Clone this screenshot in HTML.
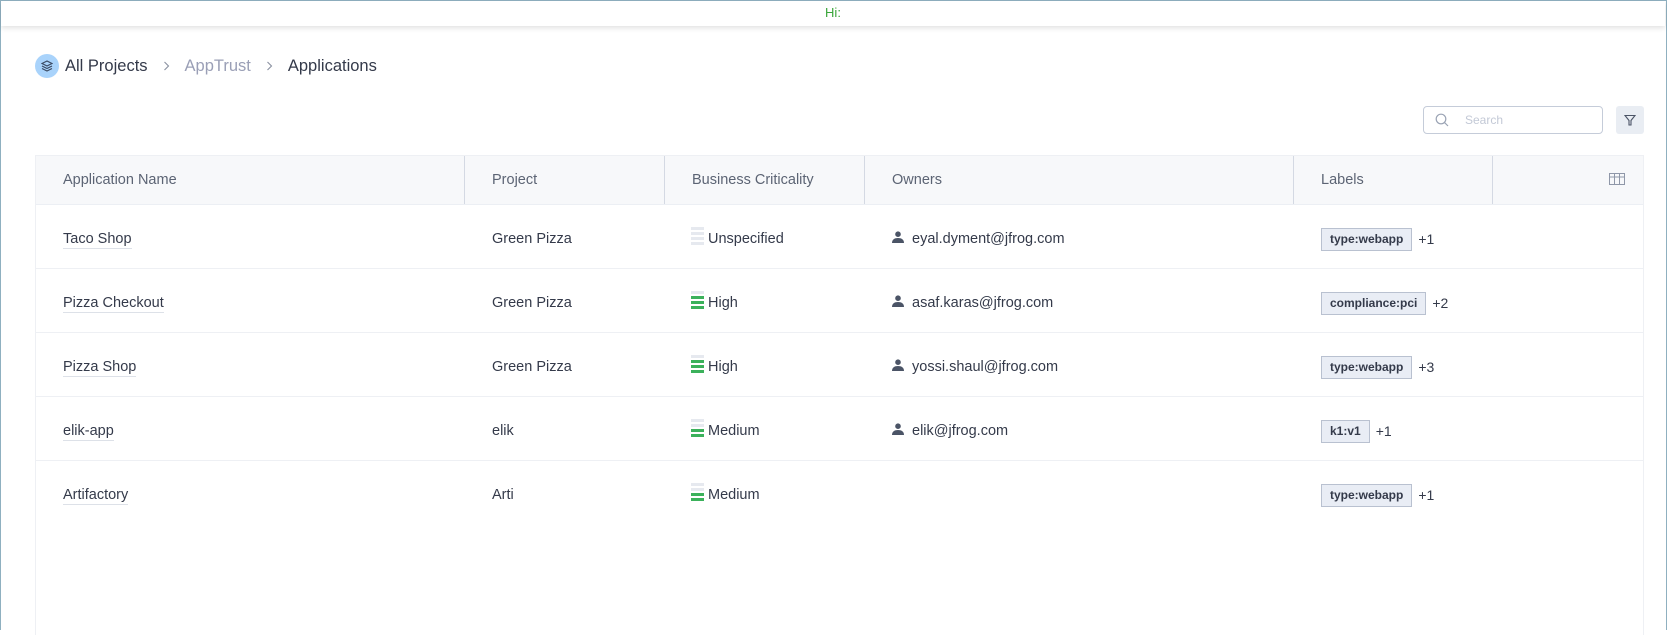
<!DOCTYPE html>
<html><head><meta charset="utf-8"><style>
*{box-sizing:border-box;margin:0;padding:0}
body{width:1667px;height:630px;overflow:hidden;background:#fff;font-family:"Liberation Sans",sans-serif;color:#343a4a;position:relative}
.frame{position:absolute;left:0;top:0;width:1667px;height:630px;border:1px solid #8fb0c0;border-bottom:none}
.top{position:absolute;left:1px;top:1px;width:1664px;height:25px;background:#fff;box-shadow:0 2px 5px rgba(0,0,0,.12);text-align:center;color:#3aa63a;font-size:13px;line-height:24px}
.bc{position:absolute;top:54px;left:35px;font-size:16.5px;display:flex;align-items:center;height:24px}
.ic{width:24px;height:24px;border-radius:50%;background:#a9d3fb;display:flex;align-items:center;justify-content:center;margin-right:6px}
.sep{margin:0 15px;display:inline-flex}
.search{position:absolute;left:1423px;top:106px;width:180px;height:28px;border:1px solid #c5ccd9;border-radius:4px;font-size:12px;color:#c3c9d6;line-height:26px;padding-left:41px}
.search svg{position:absolute;left:11px;top:6px}
.filt{position:absolute;left:1616px;top:106px;width:28px;height:28px;background:#e9edf3;border-radius:3px;display:flex;align-items:center;justify-content:center}
.tbl{position:absolute;left:35px;top:155px;width:1609px;height:480px;border:1px solid #eef0f4;border-bottom:none}
.hd{height:49px;background:#f7f8fa;border-bottom:1px solid #eceff4;position:relative;font-size:14.5px;color:#5c6474}
.hd div{position:absolute;top:0;height:48px;line-height:48px}
.vl{width:1px;background:#d4d9e3;top:0;height:48px}
.row{height:64px;border-bottom:1px solid #eef0f4;position:relative;font-size:14.5px}
.row.last{border-bottom:none}
.row>div{position:absolute;top:2px;height:64px;line-height:64px}
.nm span{border-bottom:1px solid #dde1e8;line-height:17px;display:inline-block}
.bars{display:inline-block;vertical-align:middle;width:13px;margin-right:4px;position:relative;top:-2px}
.bars i{display:block;height:3px;margin-bottom:2px;background:#e6e9ef}
.bars i.g{background:#3bb15b}
.tag{display:inline-block;border:1px solid #b9c1d0;background:#e9edf5;font-size:12px;font-weight:bold;color:#343a4a;height:23px;line-height:21px;padding:0 8px;vertical-align:middle;margin-right:6px}
.pl{vertical-align:middle;font-size:14px}
.own svg{vertical-align:middle;margin-right:8px;position:relative;top:-2px}
</style></head><body>
<div class="frame"></div>
<div class="top">Hi:</div>
<div class="bc"><div class="ic"><svg width="12" height="12" viewBox="0 0 12 12" fill="none" stroke="#3b4a63" stroke-width="1.2"><path d="M6 1L11 3.5 6 6 1 3.5Z"/><path d="M1 6l5 2.5L11 6"/><path d="M1 8.5L6 11l5-2.5"/></svg></div><span>All Projects</span><span class="sep"><svg width="7" height="10" viewBox="0 0 7 10" fill="none" stroke="#8a91a0" stroke-width="1.1"><path d="M1.5 1l4 4-4 4"/></svg></span><span style="color:#9a9fb6">AppTrust</span><span class="sep"><svg width="7" height="10" viewBox="0 0 7 10" fill="none" stroke="#8a91a0" stroke-width="1.1"><path d="M1.5 1l4 4-4 4"/></svg></span><span>Applications</span></div>
<div class="search"><svg width="14" height="14" viewBox="0 0 14 14" fill="none" stroke="#9aa3b4" stroke-width="1.2"><circle cx="6" cy="6" r="4.8"/><path d="M9.5 9.5L13 13"/></svg>Search</div>
<div class="filt"><svg width="12" height="12" viewBox="0 0 12 12" fill="none" stroke="#4b5466" stroke-width="1.1"><path d="M1 1.5h10L7 6.5V11H5V6.5Z"/></svg></div>
<div class="tbl">
<div class="hd">
<div style="left:27px">Application Name</div><div class="vl" style="left:428px"></div>
<div style="left:456px">Project</div><div class="vl" style="left:628px"></div>
<div style="left:656px">Business Criticality</div><div class="vl" style="left:828px"></div>
<div style="left:856px">Owners</div><div class="vl" style="left:1257px"></div>
<div style="left:1285px">Labels</div><div class="vl" style="left:1456px"></div>
<div style="left:1573px;top:17px;height:13px;line-height:0"><svg width="16" height="12" viewBox="0 0 16 12" fill="none" stroke="#8f97a8" stroke-width="1"><rect x=".5" y=".5" width="15" height="11"/><path d="M.5 4h15M5.5 .5v11M10.5 .5v11"/></svg></div>
</div>
<div class="row"><div class="nm" style="left:27px"><span>Taco Shop</span></div><div style="left:456px">Green Pizza</div><div style="left:655px"><span class="bars"><i></i><i></i><i></i><i></i></span>Unspecified</div><div class="own" style="left:856px"><svg width="12" height="12" viewBox="0 0 12 12" fill="#4b5466"><circle cx="6" cy="3.2" r="2.8"/><path d="M0 12c0-3.5 2.5-5 6-5s6 1.5 6 5Z"/></svg>eyal.dyment@jfrog.com</div><div style="left:1285px"><span class="tag">type:webapp</span><span class="pl">+1</span></div></div>
<div class="row"><div class="nm" style="left:27px"><span>Pizza Checkout</span></div><div style="left:456px">Green Pizza</div><div style="left:655px"><span class="bars"><i></i><i class="g"></i><i class="g"></i><i class="g"></i></span>High</div><div class="own" style="left:856px"><svg width="12" height="12" viewBox="0 0 12 12" fill="#4b5466"><circle cx="6" cy="3.2" r="2.8"/><path d="M0 12c0-3.5 2.5-5 6-5s6 1.5 6 5Z"/></svg>asaf.karas@jfrog.com</div><div style="left:1285px"><span class="tag">compliance:pci</span><span class="pl">+2</span></div></div>
<div class="row"><div class="nm" style="left:27px"><span>Pizza Shop</span></div><div style="left:456px">Green Pizza</div><div style="left:655px"><span class="bars"><i></i><i class="g"></i><i class="g"></i><i class="g"></i></span>High</div><div class="own" style="left:856px"><svg width="12" height="12" viewBox="0 0 12 12" fill="#4b5466"><circle cx="6" cy="3.2" r="2.8"/><path d="M0 12c0-3.5 2.5-5 6-5s6 1.5 6 5Z"/></svg>yossi.shaul@jfrog.com</div><div style="left:1285px"><span class="tag">type:webapp</span><span class="pl">+3</span></div></div>
<div class="row"><div class="nm" style="left:27px"><span>elik-app</span></div><div style="left:456px">elik</div><div style="left:655px"><span class="bars"><i></i><i></i><i class="g"></i><i class="g"></i></span>Medium</div><div class="own" style="left:856px"><svg width="12" height="12" viewBox="0 0 12 12" fill="#4b5466"><circle cx="6" cy="3.2" r="2.8"/><path d="M0 12c0-3.5 2.5-5 6-5s6 1.5 6 5Z"/></svg>elik@jfrog.com</div><div style="left:1285px"><span class="tag">k1:v1</span><span class="pl">+1</span></div></div>
<div class="row last"><div class="nm" style="left:27px"><span>Artifactory</span></div><div style="left:456px">Arti</div><div style="left:655px"><span class="bars"><i></i><i></i><i class="g"></i><i class="g"></i></span>Medium</div><div style="left:1285px"><span class="tag">type:webapp</span><span class="pl">+1</span></div></div>
</div>
</body></html>
